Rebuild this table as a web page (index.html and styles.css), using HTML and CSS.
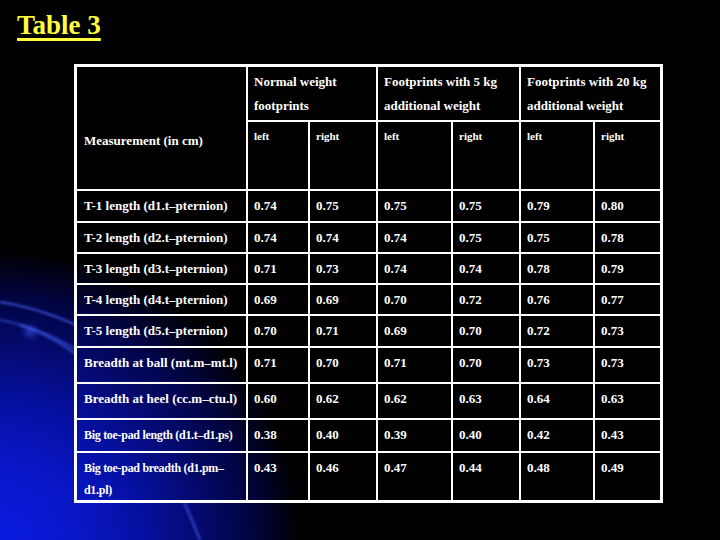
FILE: index.html
```html
<!DOCTYPE html>
<html>
<head>
<meta charset="utf-8">
<title>Table 3</title>
<link rel="stylesheet" href="styles.css">
</head>
<body>
<div class="glow-bg" aria-hidden="true"></div>
<svg class="glow" width="300" height="260" viewBox="0 0 300 260" aria-hidden="true">
  <defs>
    <filter id="soft" x="-20%" y="-20%" width="140%" height="140%">
      <feGaussianBlur stdDeviation="1.2"/>
    </filter>
    <filter id="blob" x="-100%" y="-100%" width="300%" height="300%">
      <feGaussianBlur stdDeviation="3"/>
    </filter>
  </defs>
  <g fill="none" stroke="#4a68ff" filter="url(#soft)">
    <path d="M0 22 Q120 40 245 175" stroke-width="2.5" stroke-opacity="0.6"/>
    <path d="M0 40 Q110 60 205 200" stroke-width="2" stroke-opacity="0.5"/>
    <path d="M20 45 Q130 80 200 260" stroke-width="3" stroke-opacity="0.45"/>
  </g>
  <g fill="#3a5cff" filter="url(#blob)">
    <circle cx="30" cy="52" r="5" fill-opacity="0.7"/>
  </g>
</svg>
<h1 class="title">Table 3</h1>
<div class="grid" role="table">
  <div class="cell measure" role="columnheader">Measurement (in cm)</div>
  <div class="cell group g1" role="columnheader">Normal weight<br>footprints</div>
  <div class="cell group g2" role="columnheader">Footprints with 5 kg<br>additional weight</div>
  <div class="cell group g3 end" role="columnheader">Footprints with 20 kg<br>additional weight</div>
  <div class="cell side">left</div><div class="cell side">right</div>
  <div class="cell side">left</div><div class="cell side">right</div>
  <div class="cell side">left</div><div class="cell side end">right</div>

  <div class="cell name">T-1 length (d1.t–pternion)</div><div class="cell">0.74</div><div class="cell">0.75</div><div class="cell">0.75</div><div class="cell">0.75</div><div class="cell">0.79</div><div class="cell end">0.80</div>
  <div class="cell name">T-2 length (d2.t–pternion)</div><div class="cell">0.74</div><div class="cell">0.74</div><div class="cell">0.74</div><div class="cell">0.75</div><div class="cell">0.75</div><div class="cell end">0.78</div>
  <div class="cell name">T-3 length (d3.t–pternion)</div><div class="cell">0.71</div><div class="cell">0.73</div><div class="cell">0.74</div><div class="cell">0.74</div><div class="cell">0.78</div><div class="cell end">0.79</div>
  <div class="cell name">T-4 length (d4.t–pternion)</div><div class="cell">0.69</div><div class="cell">0.69</div><div class="cell">0.70</div><div class="cell">0.72</div><div class="cell">0.76</div><div class="cell end">0.77</div>
  <div class="cell name">T-5 length (d5.t–pternion)</div><div class="cell">0.70</div><div class="cell">0.71</div><div class="cell">0.69</div><div class="cell">0.70</div><div class="cell">0.72</div><div class="cell end">0.73</div>
  <div class="cell name">Breadth at ball (mt.m–mt.l)</div><div class="cell">0.71</div><div class="cell">0.70</div><div class="cell">0.71</div><div class="cell">0.70</div><div class="cell">0.73</div><div class="cell end">0.73</div>
  <div class="cell name">Breadth at heel (cc.m–ctu.l)</div><div class="cell">0.60</div><div class="cell">0.62</div><div class="cell">0.62</div><div class="cell">0.63</div><div class="cell">0.64</div><div class="cell end">0.63</div>
  <div class="cell name small">Big toe-pad length (d1.t–d1.ps)</div><div class="cell">0.38</div><div class="cell">0.40</div><div class="cell">0.39</div><div class="cell">0.40</div><div class="cell">0.42</div><div class="cell end">0.43</div>
  <div class="cell name small last">Big toe-pad breadth (d1.pm–<br>d1.pl)</div><div class="cell last">0.43</div><div class="cell last">0.46</div><div class="cell last">0.47</div><div class="cell last">0.44</div><div class="cell last">0.48</div><div class="cell end last">0.49</div>
</div>
</body>
</html>
```
FILE: styles.css
```css
html, body {
  margin: 0;
  padding: 0;
}
body {
  width: 720px;
  height: 540px;
  overflow: hidden;
  position: relative;
  background: #000;
  font-family: "Liberation Serif", "Times New Roman", serif;
  color: #fff;
}
.glow-bg {
  position: absolute;
  left: 0;
  bottom: 0;
  width: 320px;
  height: 300px;
  z-index: 0;
  background: radial-gradient(ellipse 300px 290px at 0% 100%, #0a1ae0 0%, #0816c4 28%, #0610a0 48%, #040a70 66%, #020440 84%, rgba(0,0,0,0) 100%);
}
.glow {
  position: absolute;
  left: 0;
  top: 280px;
  z-index: 0;
}
.title {
  position: relative;
  z-index: 1;
  margin: 0;
  padding: 9px 0 0 17px;
  font-size: 27px;
  line-height: 32px;
  font-weight: bold;
  color: #ffff3c;
  text-decoration: underline;
  text-decoration-thickness: 3px;
  text-underline-offset: 4px;
}
.grid {
  position: relative;
  z-index: 1;
  margin: 23px 0 0 74px;
  width: 589px;
  box-sizing: border-box;
  border: 3px solid #fff;
  display: grid;
  grid-template-columns: 171px 62px 68px 75px 68px 74px 65px;
  grid-template-rows: 55px 69px 32px 31px 31px 31px 32px 36px 36px 33px 47px;
  /* same glow as the slide, pinned to the viewport so it lines up */
  background:
    radial-gradient(ellipse 300px 290px at 0% 100%, #0a1ae0 0%, #0816c4 28%, #0610a0 48%, #040a70 66%, #020440 84%, rgba(0,0,0,0) 100%) fixed,
    #000;
}
.cell {
  box-sizing: border-box;
  padding: 4px 0 0 6px;
  border-right: 2px solid #fff;
  border-bottom: 2px solid #fff;
  font-size: 13px;
  line-height: 22px;
  font-weight: bold;
  white-space: nowrap;
}
.cell.end { border-right: 0; }
.cell.last { border-bottom: 0; }

.measure {
  grid-row: 1 / 3;
  grid-column: 1;
  padding: 63px 0 0 7px;
}
.group {
  grid-column: span 2;
  padding-top: 3px;
  line-height: 24px;
}
.side {
  font-size: 11px;
  padding-top: 3px;
}
.name { padding-left: 7px; }
.small { font-size: 12px; letter-spacing: -0.3px; }
```
